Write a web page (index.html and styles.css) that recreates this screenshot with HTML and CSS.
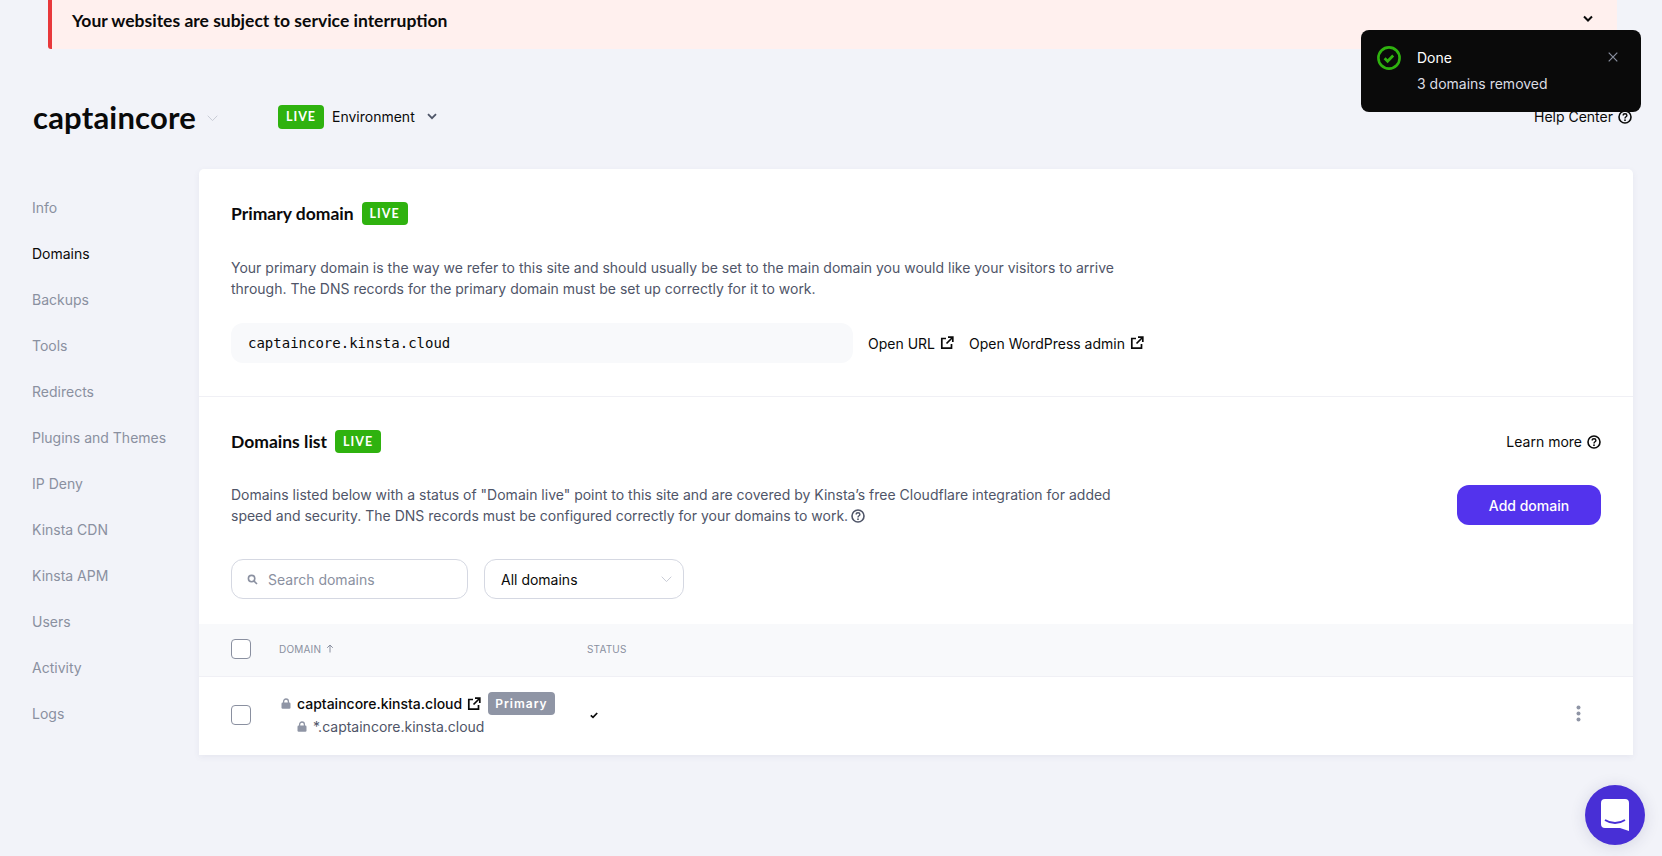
FILE: index.html
```html
<!DOCTYPE html>
<html lang="en">
<head>
<meta charset="utf-8">
<title>Domains</title>
<link rel="stylesheet" href="styles.css">
</head>
<body>
<svg class="defs" width="0" height="0" aria-hidden="true">
  <symbol id="ext" viewBox="0 0 14 14"><path d="M6 2.5H1.8v9.7h9.7V8M8 1.2h4.8V6M12.5 1.5 6.5 7.5" fill="none" stroke="currentColor" stroke-width="1.7"/></symbol>
  <symbol id="help" viewBox="0 0 14 14"><circle cx="7" cy="7" r="6" fill="none" stroke="currentColor" stroke-width="1.6"/><path d="M5.2 5.5C5.2 3.2 8.9 3.3 8.9 5.4 8.9 6.8 7 6.8 7 8.4" fill="none" stroke="currentColor" stroke-width="1.4"/><circle cx="7" cy="10.2" r=".9" fill="currentColor"/></symbol>
  <symbol id="lock" viewBox="0 0 10 11"><path d="M2.6 5V3.4a2.4 2.4 0 0 1 4.8 0V5" fill="none" stroke="currentColor" stroke-width="1.3"/><rect x=".5" y="4.6" width="9" height="6.2" rx="1.2" fill="currentColor"/></symbol>
</svg>

<div class="banner">
  <span class="banner-title">Your websites are subject to service interruption</span>
  <svg class="banner-chev" width="12" height="8" viewBox="0 0 12 8"><path d="M2 1.5 6 5.5l4-4" fill="none" stroke="#0a0a0a" stroke-width="2"/></svg>
</div>

<header class="topbar">
  <div class="site">
    <span class="site-name">captaincore</span>
    <svg class="site-chev" width="11" height="7" viewBox="0 0 11 7"><path d="M.7.7 5.5 5.6 10.3.7" fill="none" stroke="#c9ccd6" stroke-width="1"/></svg>
  </div>
  <div class="env">
    <span class="badge badge-env">LIVE</span>
    <span class="env-label">Environment</span>
    <svg width="10" height="7" viewBox="0 0 10 7"><path d="M1 1.2 5 5.2l4-4" fill="none" stroke="#4f5568" stroke-width="1.8"/></svg>
  </div>
  <a class="link help-center">Help Center <svg class="ic"><use href="#help"/></svg></a>
</header>

<div class="layout">
  <nav class="sidebar">
    <a>Info</a>
    <a class="active">Domains</a>
    <a>Backups</a>
    <a>Tools</a>
    <a>Redirects</a>
    <a>Plugins and Themes</a>
    <a>IP Deny</a>
    <a>Kinsta CDN</a>
    <a>Kinsta APM</a>
    <a>Users</a>
    <a>Activity</a>
    <a>Logs</a>
  </nav>

  <main class="card">
    <section class="primary">
      <div class="heading"><h2>Primary domain</h2><span class="badge">LIVE</span></div>
      <p class="desc">Your primary domain is the way we refer to this site and should usually be set to the main domain you would like your visitors to arrive through. The DNS records for the primary domain must be set up correctly for it to work.</p>
      <div class="url-row">
        <div class="url-box">captaincore.kinsta.cloud</div>
        <a class="link">Open URL <svg class="ic"><use href="#ext"/></svg></a>
        <a class="link">Open WordPress admin <svg class="ic"><use href="#ext"/></svg></a>
      </div>
    </section>

    <section class="domains">
      <div class="heading-row">
        <div class="heading"><h2>Domains list</h2><span class="badge">LIVE</span></div>
        <a class="link">Learn more <svg class="ic"><use href="#help"/></svg></a>
      </div>
      <div class="intro-row">
        <p class="desc">Domains listed below with a status of "Domain live" point to this site and are covered by Kinsta’s free Cloudflare integration for added speed and security. The DNS records must be configured correctly for your domains to work. <svg class="ic ic-desc"><use href="#help"/></svg></p>
        <button class="btn">Add domain</button>
      </div>
      <div class="filters">
        <div class="search">
          <svg width="11" height="11" viewBox="0 0 11 11"><circle cx="4.6" cy="4.6" r="3.2" fill="none" stroke="#8a90a0" stroke-width="1.6"/><path d="m7 7 3 3" stroke="#8a90a0" stroke-width="1.6"/></svg>
          <span>Search domains</span>
        </div>
        <div class="select">
          <span>All domains</span>
          <svg width="11" height="7" viewBox="0 0 11 7"><path d="M.7.7 5.5 5.6 10.3.7" fill="none" stroke="#c9ccd6" stroke-width="1"/></svg>
        </div>
      </div>
    </section>

    <div class="row row-head">
      <span class="check"></span>
      <span class="col-head th">DOMAIN <svg width="8" height="9" viewBox="0 0 8 9"><path d="M4 8.5V1.2M1.2 3.8 4 1l2.8 2.8" fill="none" stroke="#8a90a0" stroke-width="1"/></svg></span>
      <span class="th">STATUS</span>
    </div>
    <div class="row row-body">
      <span class="check"></span>
      <div class="col-domain">
        <div class="dom-main">
          <svg class="lock"><use href="#lock"/></svg>
          <span class="dom-name">captaincore.kinsta.cloud</span>
          <svg class="ic"><use href="#ext"/></svg>
          <span class="badge-primary">Primary</span>
        </div>
        <div class="dom-sub">
          <svg class="lock"><use href="#lock"/></svg>
          <span>*.captaincore.kinsta.cloud</span>
        </div>
      </div>
      <svg class="status-check" width="8" height="7" viewBox="0 0 8 7"><path d="M.8 3.4 3 5.4 7.2 1" fill="none" stroke="#0a0a0a" stroke-width="1.7"/></svg>
      <svg class="kebab" width="5" height="17" viewBox="0 0 5 17"><circle cx="2.5" cy="2.5" r="2" fill="#8f95a5"/><circle cx="2.5" cy="8.5" r="2" fill="#8f95a5"/><circle cx="2.5" cy="14.5" r="2" fill="#8f95a5"/></svg>
    </div>
  </main>
</div>

<aside class="toast">
  <svg class="toast-icon" width="24" height="24" viewBox="0 0 24 24"><circle cx="12" cy="12" r="10.6" fill="none" stroke="#2fb20f" stroke-width="2.6"/><path d="m7.6 12.2 3 3 5.6-5.6" fill="none" stroke="#2fb20f" stroke-width="2.8"/></svg>
  <div class="toast-text">
    <div class="toast-title">Done</div>
    <div class="toast-msg">3 domains removed</div>
  </div>
  <svg class="toast-x" width="10" height="10" viewBox="0 0 10 10"><path d="m.7.7 8.6 8.6M9.3.7 .7 9.3" stroke="#8a90a0" stroke-width="1.2"/></svg>
</aside>

<button class="chat" aria-label="Chat">
  <svg width="28" height="32" viewBox="0 0 28 32"><path d="M4 0h20a4 4 0 0 1 4 4v28l-9-3H4a4 4 0 0 1-4-4V4a4 4 0 0 1 4-4Z" fill="#fff"/><path d="M4 21c6 4 14 4 20 0" fill="none" stroke="#482fd6" stroke-width="1.8"/></svg>
</button>
</body>
</html>
```

FILE: styles.css
```css
* { box-sizing: border-box; }
html, body { margin: 0; height: 100%; }
body {
  background: #f2f3f9;
  color: #0a0a0a;
  font-family: Inter, "Liberation Sans", sans-serif;
  font-size: 14px;
  overflow: hidden;
  position: relative;
}
.defs { position: absolute; }
.banner {
  margin: 0 45px 0 48px;
  height: 49px;
  padding: 0 23px 9px 20px;
  display: flex;
  align-items: center;
  justify-content: space-between;
  background: #fff0ee;
  border-left: 4px solid #e8383b;
  border-bottom-left-radius: 3px;
}
.banner-title { font: 700 17.5px Lato, sans-serif; }
.banner-chev { margin-top: -3px; }
.topbar {
  height: 120px;
  padding: 15px 30px 0 33px;
  display: flex;
  align-items: center;
}
.site { display: flex; align-items: center; gap: 11px; width: 245px; }
.site-name { font: 700 31px Lato, sans-serif; letter-spacing: .2px; }
.site-chev { margin-top: 3px; }
.env { display: flex; align-items: center; gap: 8px; }
.env-label { margin-right: 4px; font-size: 14px; }
.help-center { margin-left: auto; }
.badge {
  display: inline-block;
  width: 46px;
  height: 23px;
  border-radius: 4px;
  background: #2fb20f;
  color: #fff;
  text-align: center;
  font: 700 12.5px/23px Lato, sans-serif;
  letter-spacing: 1px;
}
.badge-env { height: 24px; line-height: 24px; }
.link {
  display: inline-flex;
  align-items: center;
  gap: 5px;
  font-size: 14px;
  color: #0a0a0a;
  white-space: nowrap;
}
.ic { width: 14px; height: 14px; }
.layout { display: flex; align-items: flex-start; }
.sidebar { width: 199px; padding: 16px 0 0 32px; display: flex; flex-direction: column; }
.sidebar a { height: 46px; line-height: 46px; color: #8a90a0; font-size: 14px; white-space: nowrap; }
.sidebar a.active { color: #0a0a0a; }
.card {
  width: 1434px;
  height: 586px;
  background: #fff;
  border-radius: 5px 5px 0 0;
  box-shadow: 0 2px 6px rgba(90, 95, 130, .08);
  display: flex;
  flex-direction: column;
}
.primary { height: 228px; padding: 33px 32px 0; border-bottom: 1px solid #f0f0f5; }
.domains { padding: 33px 32px 0; height: 227px; }
.heading { display: flex; align-items: center; gap: 8px; }
.heading h2 { margin: 0; font: 700 17.5px Lato, sans-serif; }
.heading-row { display: flex; justify-content: space-between; align-items: center; }
.desc { margin: 0; width: 900px; color: #4f5568; font-size: 14px; line-height: 21px; }
.primary .desc { margin-top: 32px; }
.url-row { display: flex; align-items: center; gap: 15px; margin-top: 24px; }
.url-box {
  width: 622px;
  height: 40px;
  padding: 0 17px;
  display: flex;
  align-items: center;
  background: #f8f9fb;
  border-radius: 12px;
  font: 14px "DejaVu Sans Mono", monospace;
}
.intro-row { display: flex; justify-content: space-between; align-items: center; margin-top: 31px; }
.ic-desc { vertical-align: -2px; margin-left: -1px; }
.btn {
  width: 144px;
  height: 40px;
  border: 0;
  border-radius: 12px;
  background: #5333ed;
  color: #fff;
  font: 500 14px Inter, sans-serif;
}
.filters { display: flex; gap: 16px; margin-top: 33px; }
.search, .select {
  height: 40px;
  border: 1px solid #d5d8e2;
  border-radius: 12px;
  display: flex;
  align-items: center;
  font-size: 14px;
}
.search { width: 237px; padding-left: 15px; gap: 10px; color: #8a90a0; }
.select { width: 200px; padding: 0 11px 0 16px; justify-content: space-between; }
.row { display: flex; align-items: center; padding-left: 32px; }
.row-head { height: 53px; padding-bottom: 3px; background: #f8f9fb; border-bottom: 1px solid #f0f0f5; }
.row-body { flex: 1; padding-bottom: 2px; }
.check { width: 20px; height: 20px; border: 1px solid #8a90a0; border-radius: 4px; background: #fff; flex: none; }
.col-head { margin-left: 28px; width: 308px; }
.col-domain { margin: 0 0 3px 28px; width: 308px; padding-left: 2px; }
.th { color: #8a90a0; font-size: 10px; letter-spacing: .2px; }
.th svg { margin-left: 2px; }
.dom-main, .dom-sub { display: flex; align-items: center; }
.dom-main { gap: 5px; }
.lock { width: 10px; height: 11px; color: #8f95a5; }
.dom-main .lock { margin-right: 1px; }
.dom-name { font-weight: 500; }
.badge-primary {
  margin-left: 2px;
  padding: 0 7px;
  height: 23px;
  line-height: 23px;
  background: #8f95a5;
  border-radius: 4px;
  color: #fff;
  font-size: 12px;
  font-weight: 600;
  letter-spacing: 1px;
}
.dom-sub { margin: 3px 0 0 16px; gap: 6px; color: #4f5568; }
.status-check { margin-left: 3px; }
.kebab { margin: 0 52px 3px auto; }
.toast {
  position: absolute;
  left: 1361px;
  top: 30px;
  width: 280px;
  height: 82px;
  padding: 19px 23px 0 16px;
  background: #0a0a0a;
  border-radius: 8px;
  color: #fff;
  display: flex;
  align-items: flex-start;
  gap: 16px;
}
.toast-icon { margin-top: -3px; }
.toast-title { font-size: 14px; line-height: 17px; }
.toast-msg { margin-top: 9px; font-size: 14px; line-height: 17px; color: #dcdde3; }
.toast-x { margin-left: auto; margin-top: 3px; }
.chat {
  position: absolute;
  left: 1585px;
  top: 785px;
  width: 60px;
  height: 60px;
  border: 0;
  padding: 0;
  border-radius: 50%;
  background: #482fd6;
  box-shadow: 0 2px 16px rgba(40, 40, 90, .14);
  display: flex;
  align-items: center;
  justify-content: center;
}
```
